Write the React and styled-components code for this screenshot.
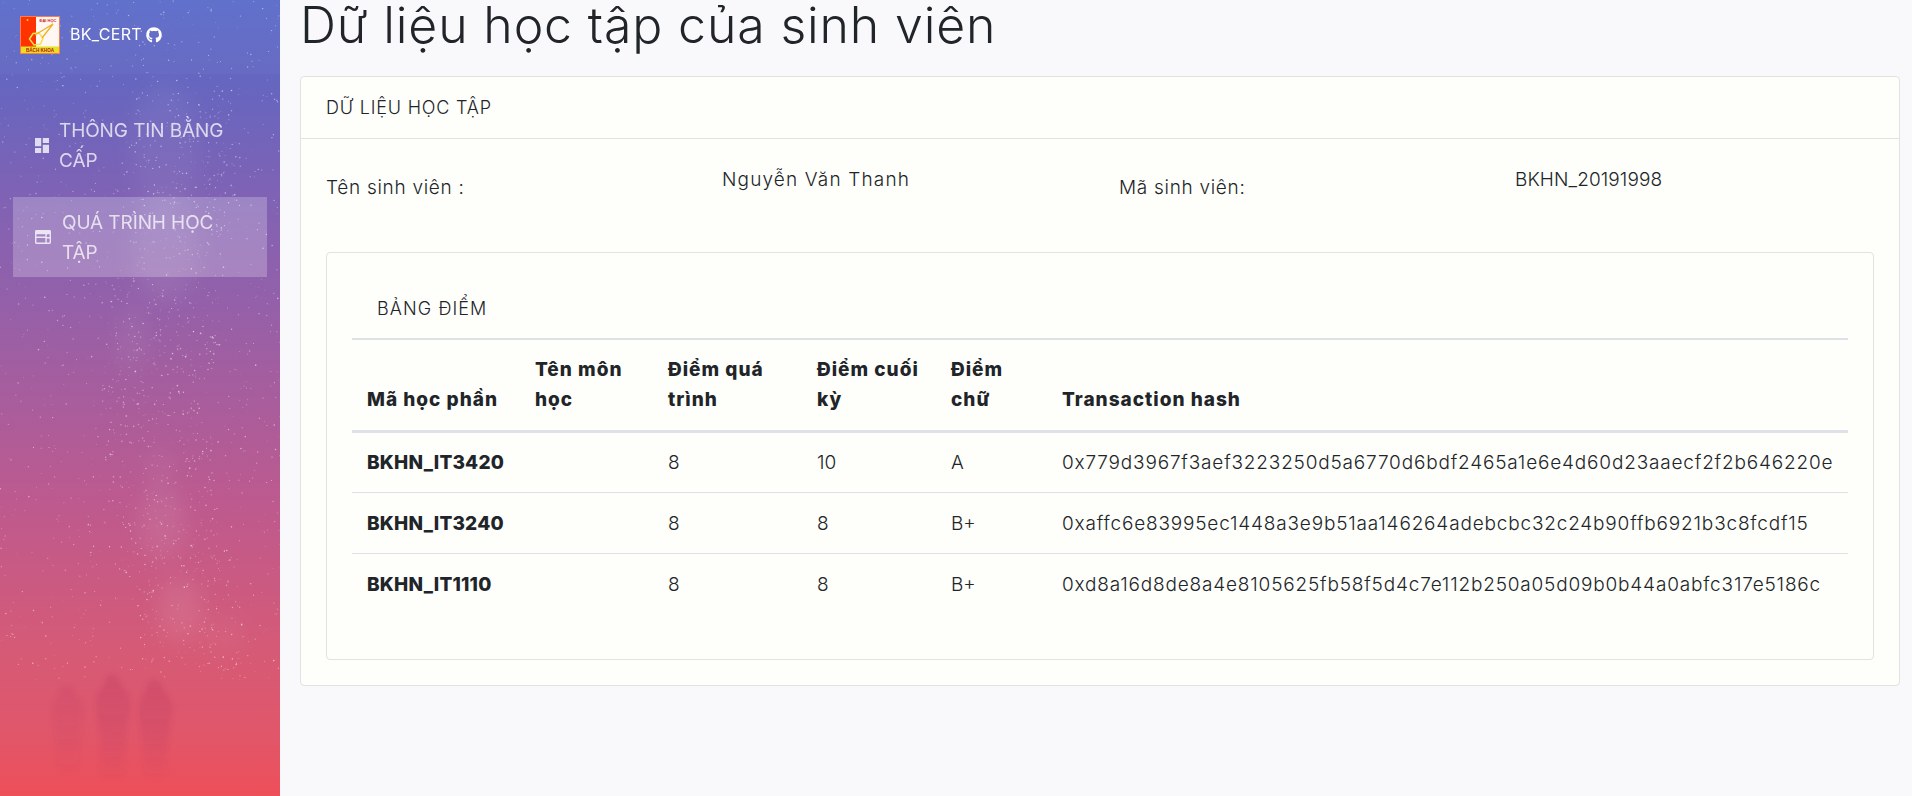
import styled, { createGlobalStyle } from 'styled-components';
import { FaGithub } from 'react-icons/fa';

const FONT = `Inter, "Noto Sans", "Liberation Sans", sans-serif`;

const rows = [
  { code: 'BKHN_IT3420', mid: '8', final: '10', letter: 'A', hash: '0x779d3967f3aef3223250d5a6770d6bdf2465a1e6e4d60d23aaecf2f2b646220e' },
  { code: 'BKHN_IT3240', mid: '8', final: '8', letter: 'B+', hash: '0xaffc6e83995ec1448a3e9b51aa146264adebcbc32c24b90ffb6921b3c8fcdf15' },
  { code: 'BKHN_IT1110', mid: '8', final: '8', letter: 'B+', hash: '0xd8a16d8de8a4e8105625fb58f5d4c7e112b250a05d09b0b44a0abfc317e5186c' },
];

// small seeded generator so the stars stay put between renders
let seed = 41;
const rnd = () => {
  seed = (seed * 16807) % 2147483647;
  return seed / 2147483647;
};
const bandX = (y) => 165 + (y - 100) * 0.03 + Math.sin(y / 90) * 18;
const stars = [
  ...Array.from({ length: 1100 }, (_, i) => ({
    id: `a${i}`,
    x: rnd() * 280,
    y: rnd() * 680,
    r: 0.35 + rnd() * 0.45,
    o: 0.18 + rnd() * 0.4,
  })),
  ...Array.from({ length: 800 }, (_, i) => {
    const y = 90 + rnd() * 580;
    return {
      id: `b${i}`,
      x: bandX(y) + (rnd() - 0.5) * 110,
      y,
      r: 0.35 + rnd() * 0.5,
      o: 0.2 + rnd() * 0.4,
    };
  }),
];

const SkyArt = () => (
  <Sky viewBox="0 0 280 796" preserveAspectRatio="none">
    <defs>
      <filter id="haze" x="-80%" y="-80%" width="260%" height="260%">
        <feGaussianBlur stdDeviation="11" />
      </filter>
      <filter id="soft" x="-30%" y="-30%" width="160%" height="160%">
        <feGaussianBlur stdDeviation="2" />
      </filter>
      <linearGradient id="fade" x1="0" y1="0" x2="0" y2="1">
        <stop offset="0" stopColor="#c23f63" stopOpacity="0.38" />
        <stop offset="0.6" stopColor="#c23f63" stopOpacity="0.22" />
        <stop offset="1" stopColor="#c23f63" stopOpacity="0" />
      </linearGradient>
    </defs>
    <g filter="url(#haze)" fill="#fff">
      <ellipse cx="165" cy="150" rx="34" ry="70" opacity="0.05" />
      <ellipse cx="165" cy="250" rx="34" ry="50" opacity="0.08" />
      <ellipse cx="132" cy="340" rx="14" ry="34" opacity="0.06" />
      <ellipse cx="160" cy="470" rx="14" ry="24" opacity="0.05" />
      <ellipse cx="162" cy="525" rx="24" ry="36" opacity="0.08" />
      <ellipse cx="180" cy="610" rx="22" ry="32" opacity="0.09" />
      <ellipse cx="225" cy="635" rx="22" ry="20" opacity="0.04" />
    </g>
    <g fill="#fff">
      {stars.map((s) => (
        <circle key={s.id} cx={s.x} cy={s.y} r={s.r} opacity={s.o} />
      ))}
    </g>
    <g filter="url(#soft)" fill="url(#fade)">
      <path opacity="0.55" d="M67 686c5 0 8 4 8 9 4 2 6 4 7 8 2 8 1 18-1 28-2 8-2 24-2 45H58c0-21-1-37-3-45-2-10-3-20-1-28 1-4 3-6 5-8 0-5 3-9 8-9z" />
      <path d="M112 675c6 0 9 5 9 11 5 3 7 6 8 10 2 8 1 18-2 30-2 10-2 30-3 56h-22c-1-26-1-46-3-56-3-12-4-22-2-30 1-4 3-7 7-10 0-6 3-11 8-11z" />
      <path d="M154 680c6 0 9 5 9 11 5 3 6 6 8 10 2 8 1 18-2 30-2 10-3 28-3 50h-22c0-22-1-40-3-50-2-12-3-22-1-30 1-4 3-7 6-10 0-6 2-11 8-11z" />
    </g>
  </Sky>
);

const LogoMark = () => (
  <Logo viewBox="0 0 40 38">
    <rect width="40" height="38" fill="#fff7f2" />
    <rect width="16" height="31" fill="#ff3300" />
    <rect y="30.500" width="40" height="7.500" fill="#e8e020" />
    <rect x="0.500" y="0.500" width="39" height="37" fill="none" stroke="#ff7a50" />
    <circle cx="7.500" cy="4" r="1" fill="#ffd800" />
    <LogoText x="28" y="6" fontSize="4" fill="#d02020">ĐẠI HỌC</LogoText>
    <path d="M9.500 23l3.500-5.500 6-.5 4 5-2.500 6-6.500 1z" fill="none" stroke="#f3e24a" strokeWidth="1.500" />
    <path d="M15 19L33 8M22 22L33 8" fill="none" stroke="#f0b020" strokeWidth="1.300" />
    <LogoText x="20" y="36.300" fontSize="4.600" fill="#b01818">BÁCH KHOA</LogoText>
  </Logo>
);

const DashboardIcon = () => (
  <NavGlyph viewBox="3 3 18 18" preserveAspectRatio="none" $w={14} $h={15} $gap={10}>
    <path d="M13 3v6h8V3M13 21h8V11h-8M3 21h8v-6H3M3 13h8V3H3v10z" fill="currentColor" />
  </NavGlyph>
);

const LayoutIcon = () => (
  <NavGlyph viewBox="0 0 17 15" preserveAspectRatio="none" $w={16} $h={14} $gap={11}>
    <path
      fillRule="evenodd"
      d="M1.500 0h14A1.500 1.500 0 0 1 17 1.500v12a1.500 1.500 0 0 1-1.500 1.500h-14A1.500 1.500 0 0 1 0 13.500v-12A1.500 1.500 0 0 1 1.500 0zM1.500 4.500v2.500h9.500V4.500H1.500zm0 4v5h9.500v-5H1.500zm11-4v3h3v-3h-3zm0 4.500v4.500h3V9h-3z"
      fill="currentColor"
    />
  </NavGlyph>
);

export default function App() {
  return (
    <Page>
      <GlobalStyle />
      <Sidebar>
        <SkyArt />
        <Brand>
          <LogoMark />
          <BrandName>BK_CERT</BrandName>
          <FaGithub size={16} />
        </Brand>
        <Nav>
          <NavItem>
            <DashboardIcon />
            <NavLabel>THÔNG TIN BẰNG CẤP</NavLabel>
          </NavItem>
          <NavItem $active>
            <LayoutIcon />
            <NavLabel>QUÁ TRÌNH HỌC TẬP</NavLabel>
          </NavItem>
        </Nav>
      </Sidebar>
      <Main>
        <Title>Dữ liệu học tập của sinh viên</Title>
        <Card>
          <CardHeader>DỮ LIỆU HỌC TẬP</CardHeader>
          <CardBody>
            <InfoRow>
              <InfoLabel>Tên sinh viên :</InfoLabel>
              <InfoValue>Nguyễn Văn Thanh</InfoValue>
              <InfoLabel>Mã sinh viên:</InfoLabel>
              <InfoValue $tight>BKHN_20191998</InfoValue>
            </InfoRow>
            <InnerCard>
              <TableTitle>BẢNG ĐIỂM</TableTitle>
              <Table>
                <colgroup>
                  <col width="168" />
                  <col width="133" />
                  <col width="149" />
                  <col width="134" />
                  <col width="111" />
                  <col />
                </colgroup>
                <thead>
                  <tr>
                    <Th>Mã học phần</Th>
                    <Th>Tên môn học</Th>
                    <Th>Điểm quá trình</Th>
                    <Th>Điểm cuối kỳ</Th>
                    <Th>Điểm chữ</Th>
                    <Th>Transaction hash</Th>
                  </tr>
                </thead>
                <tbody>
                  {rows.map(({ code, mid, final, letter, hash }) => (
                    <tr key={code}>
                      <CodeCell>{code}</CodeCell>
                      <Td />
                      <Td>{mid}</Td>
                      <Td>{final}</Td>
                      <Td>{letter}</Td>
                      <HashCell>{hash}</HashCell>
                    </tr>
                  ))}
                </tbody>
              </Table>
            </InnerCard>
          </CardBody>
        </Card>
      </Main>
    </Page>
  );
}

const GlobalStyle = createGlobalStyle`
  html, body {
    margin: 0;
    padding: 0;
    background: #f9f9fb;
  }
  * {
    box-sizing: border-box;
  }
`;

const Page = styled.div`
  display: flex;
  min-height: 100vh;
  font-family: ${FONT};
  color: #212529;
`;

const Sidebar = styled.aside`
  position: relative;
  flex: 0 0 280px;
  height: 796px;
  overflow: hidden;
  color: #fff;
  background: linear-gradient(
    180deg,
    #5b6dcb 0%,
    #6566c0 10%,
    #8062b4 25%,
    #9460a9 38%,
    #bd5a8f 63%,
    #d65a76 82%,
    #e0566a 92%,
    #ee4f59 100%
  );
`;

const Sky = styled.svg`
  position: absolute;
  inset: 0;
  width: 280px;
  height: 796px;
`;

const Brand = styled.div`
  position: relative;
  display: flex;
  align-items: center;
  height: 74px;
  padding: 0 0 4px 20px;
  background: rgba(255, 255, 255, 0.03);
`;

const Logo = styled.svg`
  width: 40px;
  height: 38px;
  margin-right: 10px;
`;

const LogoText = styled.text`
  font-family: "Liberation Sans", sans-serif;
  font-weight: 700;
  text-anchor: middle;
`;

const BrandName = styled.span`
  font-size: 16px;
  margin: 0 4px 2px 0;
  letter-spacing: 0.3px;
`;

const Nav = styled.nav`
  position: relative;
  display: flex;
  flex-direction: column;
  gap: 12px;
  padding: 31px 13px 0;
`;

const NavItem = styled.a`
  display: flex;
  align-items: center;
  height: 80px;
  padding-left: 22px;
  color: rgba(255, 255, 255, 0.74);
  background: ${(p) => (p.$active ? 'rgba(255, 255, 255, 0.23)' : 'transparent')};
`;

const NavGlyph = styled.svg`
  flex: none;
  width: ${(p) => p.$w}px;
  height: ${(p) => p.$h}px;
  margin-right: ${(p) => p.$gap}px;
  color: rgba(255, 255, 255, 0.78);
`;

const NavLabel = styled.span`
  width: 180px;
  padding-top: 2px;
  font-size: 19px;
  line-height: 30px;
  letter-spacing: -0.1px;
`;

const Main = styled.main`
  flex: 1;
  min-width: 0;
  padding: 0 12px 0 20px;
`;

const Title = styled.h1`
  height: 76px;
  margin: 0;
  font-size: 50px;
  font-weight: 300;
  line-height: 50px;
  letter-spacing: 0.85px;
`;

const Card = styled.section`
  background: #fefefb;
  border: 1px solid #e2e2e2;
  border-radius: 4px;
`;

const CardHeader = styled.header`
  display: flex;
  align-items: center;
  height: 62px;
  padding-left: 25px;
  font-size: 18px;
  font-weight: 350;
  letter-spacing: 0.8px;
  border-bottom: 1px solid #e2e2e2;
`;

const CardBody = styled.div`
  padding: 25px;
`;

const InfoRow = styled.div`
  display: grid;
  grid-template-columns: 396px 397px 396px 1fr;
  height: 88px;
  font-size: 19px;
  font-weight: 350;
`;

const InfoLabel = styled.div`
  padding-top: 10px;
  line-height: 27px;
  letter-spacing: 0.7px;
`;

const InfoValue = styled.div`
  padding-top: 2px;
  line-height: 27px;
  letter-spacing: ${(p) => (p.$tight ? '0.1px' : '1.15px')};
`;

const InnerCard = styled.div`
  height: 408px;
  padding: 25px 25px 0;
  border: 1px solid #e2e2e2;
  border-radius: 4px;
`;

const TableTitle = styled.div`
  display: flex;
  align-items: center;
  height: 62px;
  padding-left: 25px;
  font-size: 18px;
  font-weight: 350;
  letter-spacing: 1.1px;
  border-bottom: 2px solid #dee2e6;
`;

const Table = styled.table`
  width: 100%;
  table-layout: fixed;
  border-collapse: collapse;
  font-size: 19px;
`;

const Th = styled.th`
  height: 91px;
  padding: 10px 15px 15px;
  text-align: left;
  vertical-align: bottom;
  font-weight: 800;
  line-height: 30px;
  letter-spacing: 1px;
  border-bottom: 3px solid #dee2e6;
`;

const Td = styled.td`
  height: 61px;
  padding: 1px 15px 0;
  font-weight: 350;
  border-bottom: 1px solid #dee2e6;

  tr:last-child & {
    border-bottom: 0;
  }
`;

const CodeCell = styled(Td)`
  font-weight: 800;
  letter-spacing: 0.2px;
`;

const HashCell = styled(Td)`
  white-space: nowrap;
  letter-spacing: 0.82px;
`;
